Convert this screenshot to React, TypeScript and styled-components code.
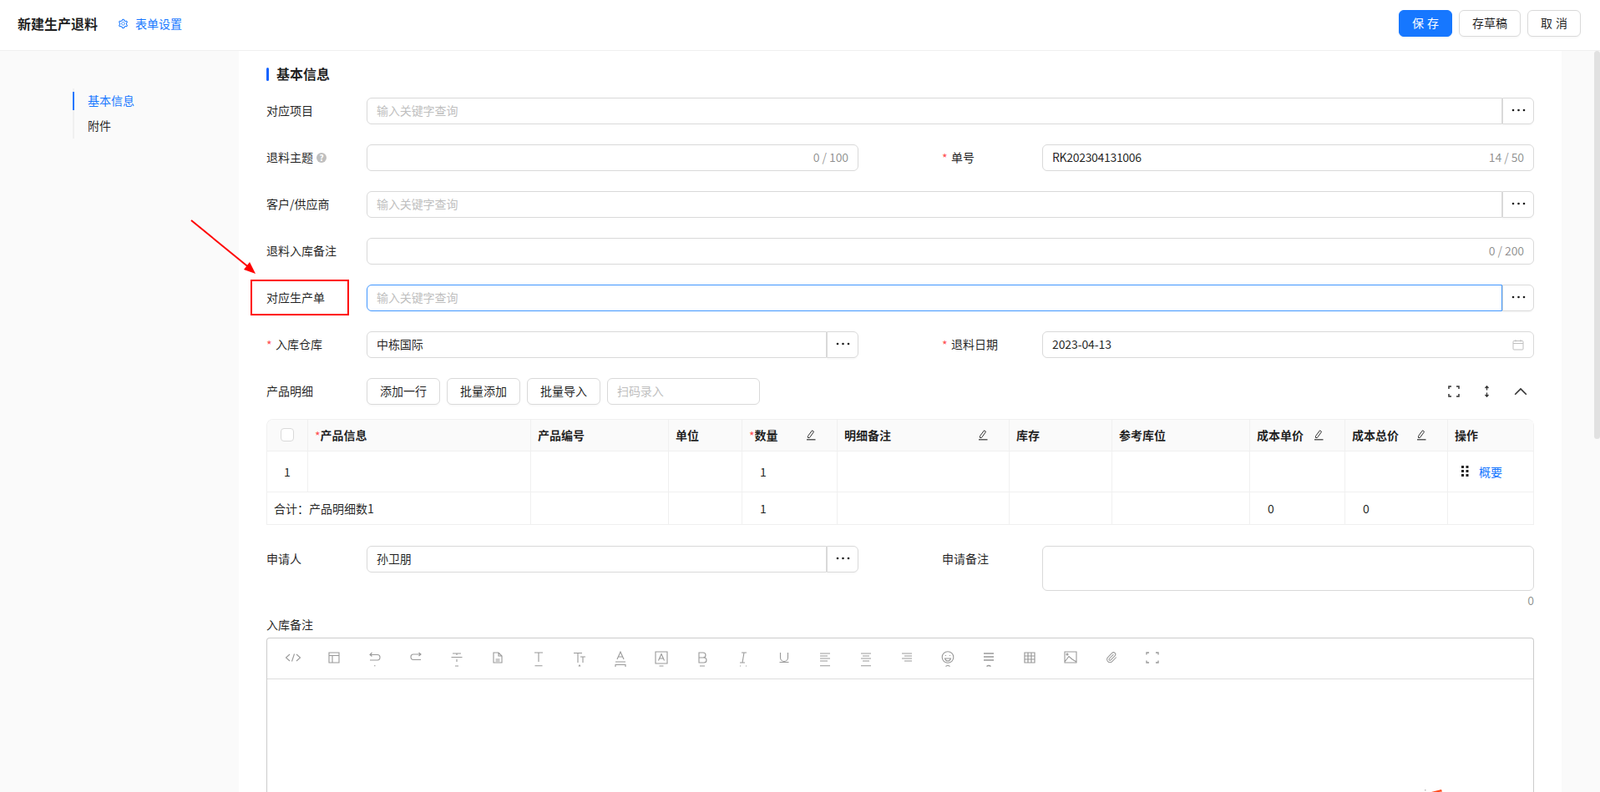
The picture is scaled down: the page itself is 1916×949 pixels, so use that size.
import React from "react";
import styled, { createGlobalStyle } from "styled-components";
import { AiOutlineSetting } from "react-icons/ai";

const Global = createGlobalStyle`
  html, body { margin: 0; padding: 0; height: 100%; overflow: hidden; background: #fff; }
  body { font-family: "Noto Sans CJK SC", "Liberation Sans", sans-serif; font-size: 14px; color: rgba(0,0,0,.88); line-height: 22px; }
  * { box-sizing: border-box; }
  input, textarea, button { font-family: inherit; font-size: 14px; }
`;

const Page = styled.div`
  position: relative;
  width: 1916px;
  height: 949px;
  overflow: hidden;
  display: flex;
  flex-direction: column;
`;
const TopBar = styled.header`
  flex: 0 0 61px;
  display: flex;
  align-items: center;
  padding: 0 23px 4px 21px;
  border-bottom: 1px solid #f0f0f0;
`;
const PageTitle = styled.h1`
  margin: 0 24px 1px 0;
  font-size: 16px;
  font-weight: 600;
  line-height: 24px;
`;
const SettingLink = styled.a`
  display: flex;
  align-items: center;
  gap: 8px;
  color: #1677ff;
`;
const TopActions = styled.div`
  margin-left: auto;
  display: flex;
  gap: 8px;
`;
const Btn = styled.button<{ $primary?: boolean; $w?: number }>`
  height: 32px;
  width: ${(p) => (p.$w ? `${p.$w}px` : "auto")};
  padding: 0 0 2px;
  word-spacing: 1px;
  border-radius: 6px;
  border: 1px solid ${(p) => (p.$primary ? "#1677ff" : "#d9d9d9")};
  background: ${(p) => (p.$primary ? "#1677ff" : "#fff")};
  color: ${(p) => (p.$primary ? "#fff" : "rgba(0,0,0,.88)")};
  box-shadow: 0 2px 0 rgba(0,0,0,.02);
`;
const Body = styled.div`
  flex: 1;
  display: flex;
  min-height: 0;
`;
const Aside = styled.aside`
  flex: 0 0 286px;
  background: #fafafa;
  padding: 45px 0 0 87px;
`;
const Nav = styled.nav`
  display: flex;
  flex-direction: column;
  gap: 8px;
  width: 150px;
  padding: 4px 0;
  border-left: 2px solid #f0f0f0;
`;
const NavItem = styled.a<{ $active?: boolean }>`
  display: block;
  height: 22px;
  line-height: 20px;
  margin-left: -2px;
  padding-left: 16px;
  border-left: 2px solid ${(p) => (p.$active ? "#1677ff" : "transparent")};
  color: ${(p) => (p.$active ? "#1677ff" : "rgba(0,0,0,.88)")};
`;
const Main = styled.main`
  flex: 0 0 1584px;
  padding: 16px 33px 0;
  overflow: hidden;
`;
const Gutter = styled.div`
  flex: 0 0 39px;
  background: #fafafa;
`;
const ScrollTrack = styled.div`
  flex: 0 0 7px;
  background: #fafafa;
`;
const ScrollThumb = styled.div`
  height: 465px;
  background: #e1e1e1;
  border-radius: 4px;
`;
const SectionTitle = styled.h2`
  margin: 0 0 16px;
  height: 24px;
  display: flex;
  align-items: center;
  gap: 9px;
  font-size: 16px;
  font-weight: 600;
  line-height: 20px;
  &::before {
    content: "";
    width: 3px;
    height: 16px;
    border-radius: 2px;
    background: #1463ff;
  }
`;
const SectionText = styled.span`
  padding-bottom: 2px;
`;
const Form = styled.div`
  display: grid;
  grid-template-columns: 709px 709px;
  column-gap: 100px;
  row-gap: 24px;
`;
const Field = styled.div<{ $wide?: boolean }>`
  display: flex;
  align-items: center;
  min-height: 32px;
  grid-column: ${(p) => (p.$wide ? "1 / -1" : "auto")};
`;
const Label = styled.label`
  flex: 0 0 120px;
  display: flex;
  align-items: center;
  padding-bottom: 2px;
`;
const Star = styled.span`
  width: 11px;
  color: #ff4d4f;
  position: relative;
  top: 1px;
`;
const Help = styled.span`
  width: 12px;
  height: 12px;
  margin: 2px 0 0 4px;
  border-radius: 50%;
  background: #bfbfbf;
  color: #fff;
  font-size: 10px;
  line-height: 12px;
  text-align: center;
  font-weight: 700;
`;
const InputBox = styled.div<{ $focus?: boolean; $group?: boolean }>`
  flex: 1;
  display: flex;
  align-items: center;
  height: 32px;
  min-width: 0;
  padding: 0 11px;
  background: #fff;
  border: 1px solid ${(p) => (p.$focus ? "#4096ff" : "#d9d9d9")};
  border-radius: ${(p) => (p.$group ? "6px 0 0 6px" : "6px")};
`;
const Input = styled.input<{ $tight?: boolean }>`
  flex: 1;
  min-width: 0;
  height: 30px;
  padding: 0 0 2px;
  border: 0;
  outline: 0;
  background: transparent;
  color: rgba(0,0,0,.88);
  letter-spacing: ${(p) => (p.$tight ? "-.32px" : "-.1px")};
  &::placeholder { color: #bfbfbf; opacity: 1; }
`;
const Count = styled.span`
  color: rgba(0,0,0,.45);
  margin-left: 4px;
  padding-bottom: 2px;
  letter-spacing: -.1px;
`;
const EllipsisBtn = styled.button`
  flex: 0 0 38px;
  height: 32px;
  padding: 0 0 2px;
  display: flex;
  align-items: center;
  justify-content: center;
  background: #fff;
  border: 1px solid #d9d9d9;
  border-radius: 0 6px 6px 0;
  box-shadow: 0 2px 0 rgba(0,0,0,.02);
`;
const DetailBar = styled.div`
  display: flex;
  align-items: center;
  gap: 8px;
  height: 32px;
  margin-top: 24px;
`;
const DetailLabel = styled.span`
  flex: 0 0 112px;
  padding-bottom: 2px;
`;
const ScanBox = styled(InputBox)`
  flex: 0 0 183px;
`;
const BarIcons = styled.div`
  margin-left: auto;
  display: flex;
  align-items: center;
  gap: 24px;
  padding-right: 8px;
`;
const TableWrap = styled.div`
  margin-top: 17px;
  border-top: 1px solid #f0f0f0;
  border-left: 1px solid #f0f0f0;
  border-radius: 8px 8px 0 0;
  overflow: hidden;
`;
const Table = styled.table`
  width: 1517px;
  table-layout: fixed;
  border-collapse: separate;
  border-spacing: 0;
`;
const Th = styled.th`
  height: 38px;
  padding: 0 8px 1px;
  text-align: left;
  font-weight: 600;
  background: #fafafa;
  border-right: 1px solid #f0f0f0;
  border-bottom: 1px solid #f0f0f0;
`;
const Td = styled.td<{ $h?: number; $center?: boolean; $num?: boolean }>`
  height: ${(p) => p.$h ?? 49}px;
  padding: 0 8px 0 ${(p) => (p.$num ? 21 : 8)}px;
  text-align: ${(p) => (p.$center ? "center" : "left")};
  border-right: 1px solid #f0f0f0;
  border-bottom: 1px solid #f0f0f0;
`;
const ThInner = styled.div`
  display: flex;
  align-items: center;
  justify-content: space-between;
  padding-right: 16px;
`;
const ReqMark = styled.span`
  color: #ff4d4f;
  font-weight: 400;
  position: relative;
  top: 1px;
`;
const Check = styled.span`
  display: block;
  width: 16px;
  height: 16px;
  margin: 0 auto;
  border: 1px solid #d9d9d9;
  border-radius: 4px;
  background: #fff;
`;
const OpCell = styled.div`
  display: flex;
  align-items: center;
  gap: 12px;
  padding-left: 8px;
`;
const OpLink = styled.a`
  color: #1677ff;
`;
const ApplyGrid = styled(Form)`
  margin-top: 25px;
`;
const ApplyField = styled(Field)`
  align-items: flex-start;
`;
const ApplyLabel = styled(Label)`
  height: 32px;
`;
const NoteCol = styled.div`
  flex: 1;
  display: flex;
  flex-direction: column;
`;
const TextArea = styled.textarea`
  height: 54px;
  padding: 4px 11px;
  resize: none;
  border: 1px solid #d9d9d9;
  border-radius: 6px;
  outline: 0;
`;
const NoteCount = styled.div`
  text-align: right;
  color: rgba(0,0,0,.45);
  height: 22px;
`;
const EditorLabel = styled.div`
  margin: 7px 0 5px;
  height: 22px;
`;
const Editor = styled.div`
  border: 1px solid #ccc;
  border-bottom: 0;
  border-radius: 4px 4px 0 0;
`;
const EditorBar = styled.div`
  display: flex;
  height: 49px;
  padding: 11px 0 0 6px;
  border-bottom: 1px solid #ddd;
`;
const ToolSlot = styled.div`
  flex: 0 0 49px;
  display: flex;
  justify-content: center;
`;
const ToolSvg = styled.svg.attrs({ viewBox: "0 0 24 28", width: 24, height: 28 })`
  display: block;
  fill: none;
  stroke: #999;
  stroke-width: 1.1;
`;
const EditorBody = styled.div`
  position: relative;
  height: 300px;
`;
const FloatMark = styled.svg`
  position: absolute;
  left: 1386px;
  top: 131px;
`;
const RedBox = styled.div`
  position: absolute;
  left: 300px;
  top: 335px;
  width: 118px;
  height: 43px;
  border: 2px solid #f00;
  pointer-events: none;
`;
const ArrowSvg = styled.svg`
  position: absolute;
  left: 220px;
  top: 255px;
  pointer-events: none;
`;

const Dots = () => (
  <svg width="17" height="4" viewBox="0 0 17 4" fill="#1a1a1a">
    <circle cx="2" cy="2" r="1.3" />
    <circle cx="8.5" cy="2" r="1.3" />
    <circle cx="15" cy="2" r="1.3" />
  </svg>
);
const EditIcon = () => (
  <svg width="14" height="14" viewBox="0 0 14 14" fill="none" stroke="#333" strokeWidth="1">
    <path d="M3.5 10.5V8.5L8.5 1.8 10.6 3.3 5.4 10.5Z" />
    <path d="M2 12.8H12.5" strokeWidth="1.2" />
  </svg>
);
const Grip = () => (
  <svg width="9" height="14" viewBox="0 0 9 14" fill="#222">
    {[0, 5, 10].map((y) => (
      <React.Fragment key={y}>
        <rect x="0" y={y} width="3" height="3" />
        <rect x="5.5" y={y} width="3" height="3" />
      </React.Fragment>
    ))}
  </svg>
);
const Calendar = () => (
  <svg width="14" height="14" viewBox="0 0 14 14" fill="none" stroke="#bfbfbf" strokeWidth="1">
    <rect x="1" y="2.5" width="12" height="10.5" rx="1" />
    <path d="M1 5.5H13M4 1V3.5M10 1V3.5" />
  </svg>
);
const FullIcon = () => (
  <svg width="16" height="14" viewBox="0 0 16 14" fill="none" stroke="#333" strokeWidth="1.5">
    <path d="M2 4V1H5M11 1H14V4M14 10V13H11M5 13H2V10" />
  </svg>
);
const HeightIcon = () => (
  <svg width="16" height="14" viewBox="0 0 16 14" fill="none" stroke="#333" strokeWidth="1.3">
    <path d="M7.5 1V5.5M5.5 3L7.5 .8 9.5 3M7.5 8.5V13M5.5 11L7.5 13.2 9.5 11" />
  </svg>
);
const ChevronIcon = () => (
  <svg width="16" height="10" viewBox="0 0 16 10" fill="none" stroke="#333" strokeWidth="1.6">
    <path d="M1.2 8.8L8 2 14.8 8.8" />
  </svg>
);

const toolIcons: React.ReactNode[] = [
  <path d="M8 8L3.5 12 8 16M16 8L20.5 12 16 16M13.5 7.5L10.5 16.5" />,
  <path d="M6 6H18V18H6ZM6 9.5H18M10 9.5V18" />,
  <path d="M8.5 6L6 8.5 8.5 10.5M6 8.5H15Q18 8.5 18 11.5 18 15 15 15H6M11 21.8H12.5" />,
  <path d="M15.5 6L18 8 15.5 10M18 8H9Q6 8 6 11 6 14.5 9 14.5H18" />,
  <path d="M7 7H17M12 7V9M5.5 11.5H18.5M12 14V17M10 22H14" />,
  <path d="M7 6H13L17 10V18H7ZM13 6V10H17M9.5 14H14.5M9.5 16H14.5" />,
  <path d="M7 6H17M12 6V17M7.5 21.7H16.5" />,
  <path d="M5 6.5H15M10 6.5V18M13 11H19M16 11V18M11 22.5L12 21 13 22.5" />,
  <path d="M8 14L12 5 16 14M9.5 11H14.5M6 17H18M6 23V20.5H18V23" />,
  <path d="M5 5H19V19H5ZM8.5 15.5L12 7.5 15.5 15.5M9.5 13H14.5M9.5 22H14.5" />,
  <path d="M8 6H13A3 3 0 0 1 13 12H8ZM8 12H14A3 3 0 0 1 14 18H8ZM9 22H15" />,
  <path d="M10 6H16M8 18H14M13 6L11 18M8 22H9M15 22H16" />,
  <path d="M7.5 6V12A4.5 4.5 0 0 0 16.5 12V6M6.5 17.5H17.5" />,
  <path d="M6 7H18M6 10H15M6 13H18M6 16H15M6 21.8H18" />,
  <path d="M6 7H18M8 10H16M6 13H18M8 16H16M6 21.8H18" />,
  <path d="M6 7H18M9 10H18M6 13H18M9 16H18" />,
  <>
    <circle cx="12" cy="11.5" r="6.8" />
    <path d="M9 9.5H10M14 9.5H15M8.5 13H15.5Q14.5 16 12 16 9.5 16 8.5 13ZM9.5 22.5Q12 20.5 14.5 22.5" />
  </>,
  <path d="M6 7H18M6 11H18M6 15H18M9.5 22.5Q12 20.5 14.5 22.5" strokeWidth="1.4" />,
  <path d="M6 6H18V18H6ZM6 10H18M6 14H18M10 6V18M14 6V18" strokeWidth="1.2" />,
  <>
    <path d="M5 5H19V18H5ZM5 17L10 10.5 14 14 19 17" />
    <circle cx="8" cy="8" r="1" />
  </>,
  <g transform="translate(4.8 4.5) scale(.6)" strokeWidth="1.7">
    <path d="m16 6-8.414 8.586a2 2 0 0 0 2.829 2.829l8.414-8.586a4 4 0 1 0-5.657-5.657l-8.379 8.551a6 6 0 1 0 8.485 8.485l8.379-8.551" />
  </g>,
  <path d="M5 8.5V6H8M16 6H19V8.5M19 15.5V18H16M8 18H5V15.5" strokeWidth="1.3" />,
];

const colWidths = [49, 267, 165, 88, 114, 206, 123, 165, 114, 123, 103];

export default function App() {
  return (
    <Page>
      <Global />
      <TopBar>
        <PageTitle>新建生产退料</PageTitle>
        <SettingLink>
          <AiOutlineSetting size={13} />
          <span>表单设置</span>
        </SettingLink>
        <TopActions>
          <Btn $primary $w={64}>保 存</Btn>
          <Btn $w={74}>存草稿</Btn>
          <Btn $w={64}>取 消</Btn>
        </TopActions>
      </TopBar>
      <Body>
        <Aside>
          <Nav>
            <NavItem $active>基本信息</NavItem>
            <NavItem>附件</NavItem>
          </Nav>
        </Aside>
        <Main>
          <SectionTitle><SectionText>基本信息</SectionText></SectionTitle>
          <Form>
            <Field $wide>
              <Label>对应项目</Label>
              <InputBox $group><Input placeholder="输入关键字查询" /></InputBox>
              <EllipsisBtn><Dots /></EllipsisBtn>
            </Field>
            <Field>
              <Label>退料主题<Help>?</Help></Label>
              <InputBox><Input /><Count>0 / 100</Count></InputBox>
            </Field>
            <Field>
              <Label><Star>*</Star>单号</Label>
              <InputBox><Input $tight defaultValue="RK202304131006" /><Count>14 / 50</Count></InputBox>
            </Field>
            <Field $wide>
              <Label>客户/供应商</Label>
              <InputBox $group><Input placeholder="输入关键字查询" /></InputBox>
              <EllipsisBtn><Dots /></EllipsisBtn>
            </Field>
            <Field $wide>
              <Label>退料入库备注</Label>
              <InputBox><Input /><Count>0 / 200</Count></InputBox>
            </Field>
            <Field $wide>
              <Label>对应生产单</Label>
              <InputBox $group $focus><Input placeholder="输入关键字查询" /></InputBox>
              <EllipsisBtn><Dots /></EllipsisBtn>
            </Field>
            <Field>
              <Label><Star>*</Star>入库仓库</Label>
              <InputBox $group><Input defaultValue="中栋国际" /></InputBox>
              <EllipsisBtn><Dots /></EllipsisBtn>
            </Field>
            <Field>
              <Label><Star>*</Star>退料日期</Label>
              <InputBox><Input defaultValue="2023-04-13" /><Calendar /></InputBox>
            </Field>
          </Form>
          <DetailBar>
            <DetailLabel>产品明细</DetailLabel>
            <Btn $w={88}>添加一行</Btn>
            <Btn $w={88}>批量添加</Btn>
            <Btn $w={88}>批量导入</Btn>
            <ScanBox><Input placeholder="扫码录入" /></ScanBox>
            <BarIcons>
              <FullIcon />
              <HeightIcon />
              <ChevronIcon />
            </BarIcons>
          </DetailBar>
          <TableWrap>
            <Table>
              <colgroup>
                {colWidths.map((w, i) => <col key={i} style={{ width: w }} />)}
              </colgroup>
              <thead>
                <tr>
                  <Th><Check /></Th>
                  <Th><ReqMark>*</ReqMark>产品信息</Th>
                  <Th>产品编号</Th>
                  <Th>单位</Th>
                  <Th><ThInner><span><ReqMark>*</ReqMark>数量</span><EditIcon /></ThInner></Th>
                  <Th><ThInner>明细备注<EditIcon /></ThInner></Th>
                  <Th>库存</Th>
                  <Th>参考库位</Th>
                  <Th><ThInner>成本单价<EditIcon /></ThInner></Th>
                  <Th><ThInner>成本总价<EditIcon /></ThInner></Th>
                  <Th>操作</Th>
                </tr>
              </thead>
              <tbody>
                <tr>
                  <Td $center>1</Td>
                  <Td /><Td /><Td />
                  <Td $num>1</Td>
                  <Td /><Td /><Td /><Td /><Td />
                  <Td><OpCell><Grip /><OpLink>概要</OpLink></OpCell></Td>
                </tr>
                <tr>
                  <Td $h={39} colSpan={2}>合计：产品明细数1</Td>
                  <Td $h={39} /><Td $h={39} />
                  <Td $h={39} $num>1</Td>
                  <Td $h={39} /><Td $h={39} /><Td $h={39} />
                  <Td $h={39} $num>0</Td>
                  <Td $h={39} $num>0</Td>
                  <Td $h={39} />
                </tr>
              </tbody>
            </Table>
          </TableWrap>
          <ApplyGrid>
            <ApplyField>
              <ApplyLabel>申请人</ApplyLabel>
              <InputBox $group><Input defaultValue="孙卫朋" /></InputBox>
              <EllipsisBtn><Dots /></EllipsisBtn>
            </ApplyField>
            <ApplyField>
              <ApplyLabel>申请备注</ApplyLabel>
              <NoteCol>
                <TextArea />
                <NoteCount>0</NoteCount>
              </NoteCol>
            </ApplyField>
          </ApplyGrid>
          <EditorLabel>入库备注</EditorLabel>
          <Editor>
            <EditorBar>
              {toolIcons.map((icon, i) => (
                <ToolSlot key={i}><ToolSvg>{icon}</ToolSvg></ToolSlot>
              ))}
            </EditorBar>
            <EditorBody>
              <FloatMark width="24" height="6" viewBox="0 0 24 6">
                <rect x="0" y="1" width="1.5" height="1.5" fill="#bbb" />
                <path d="M8 4L20 1 21 3.5 9 5Z" fill="#ff4a1c" />
              </FloatMark>
            </EditorBody>
          </Editor>
        </Main>
        <Gutter />
        <ScrollTrack><ScrollThumb /></ScrollTrack>
      </Body>
      <RedBox />
      <ArrowSvg width="100" height="85" viewBox="0 0 100 85">
        <path d="M9 9L80 67" stroke="#f00" strokeWidth="2" fill="none" />
        <path d="M86 73L72 68 79 59Z" fill="#f00" />
      </ArrowSvg>
    </Page>
  );
}
